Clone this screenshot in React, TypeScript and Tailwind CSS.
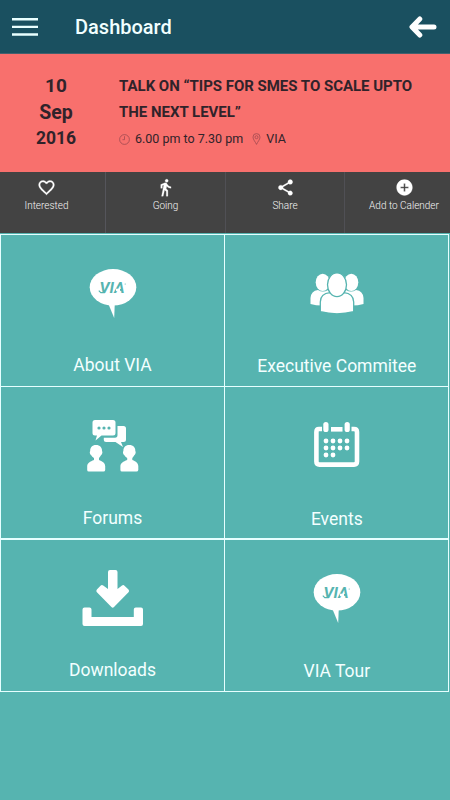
import type { ReactNode } from "react";

function SpeechLogo() {
  return (
    <svg width="48" height="50" viewBox="0 0 48 50">
      <ellipse cx="24" cy="18.3" rx="23.3" ry="18.3" fill="#fff" />
      <path d="M19 34 L25.2 49 L25.8 34 Z" fill="#fff" />
      <text
        x="10.5"
        y="24.2"
        fontSize="15.5"
        fontWeight="700"
        fontStyle="italic"
        fill="#56b4b0"
        textLength="25"
        lengthAdjust="spacingAndGlyphs"
        style={{ fontFamily: "Roboto, sans-serif" }}
      >
        VIA
      </text>
      <path d="M27 20.900h4" stroke="#fff" strokeWidth="2.400" />
      <path d="M9.800 21.600l2 2h4" fill="none" stroke="#56b4b0" strokeWidth="1.200" />
      <circle cx="36.200" cy="15" r=".6" fill="#56b4b0" />
    </svg>
  );
}

function PeopleIcon() {
  return (
    <svg width="54" height="41" viewBox="0 0 54 41" fill="#fff">
      <ellipse cx="12.7" cy="9.3" rx="7" ry="8.6" />
      <path d="M.5 31V25Q1 17.8 8 17Q13 20 18 17L21 22V32Q9 33.5.5 31Z" />
      <ellipse cx="41.3" cy="9.3" rx="7" ry="8.6" />
      <path d="M53.5 31V25Q53 17.8 46 17Q41 20 36 17L33 22V32Q45 33.5 53.5 31Z" />
      <g stroke="#56b4b0" strokeWidth="1.3">
        <path d="M10.3 38.7V29Q10.500 20.500 20 19.700Q27 25.500 34 19.700Q43.300 20.500 43.700 29V38.700Q27 43 10.300 38.700Z" />
        <ellipse cx="27" cy="11.700" rx="9.500" ry="11.900" />
      </g>
    </svg>
  );
}

function ForumIcon() {
  return (
    <svg width="52" height="53" viewBox="0 0 52 53" fill="#fff">
      <path d="M8 1H26Q28.500 1 28.500 3.500V14Q28.500 16.500 26 16.500H14.500L8.500 21.500L10 16.500H8Q5.500 16.500 5.500 14V3.500Q5.500 1 8 1Z" />
      <path d="M30.500 7H36.500Q39 7 39 9.500V20.500Q39 23 36.500 23H34L36 28L28.500 23H19Q16.800 23 16.800 21V18.800H28Q30.500 18.800 30.500 16Z" />
      <g fill="#56b4b0">
        <circle cx="12" cy="9" r="1.6" />
        <circle cx="17" cy="9" r="1.6" />
        <circle cx="22" cy="9" r="1.6" />
      </g>
      <path d="M9 26C13 26 15.300 28.700 15 32C16 33 15 35.500 14 36.200Q13 38 12 39V41C16 42.500 18 44 18.200 47V51Q18 52.500 16.500 52.500H1.800Q.2 52.500.2 51V47C.4 44 3 42.500 7 41V39Q5 38 4.200 36.200C3 35.500 2.200 33 3.200 32C3 28.700 5 26 9 26Z" />
      <path d="M42.300 26C46.300 26 48.600 28.700 48.300 32C49.300 33 48.300 35.500 47.300 36.200Q46.300 38 45.300 39V41C49.300 42.500 51 44 51.300 47V51Q51 52.500 49.500 52.500H35Q33.400 52.500 33.400 51V47C33.600 44 36.200 42.500 40.200 41V39Q38.200 38 37.400 36.200C36.200 35.500 35.400 33 36.400 32C36.200 28.700 38.200 26 42.300 26Z" />
    </svg>
  );
}

const calendarDots = [
  [12, 19], [19, 19], [26, 19], [33, 19],
  [12, 26], [19, 26], [26, 26], [33, 26],
  [12, 33], [19, 33],
];

function CalendarIcon() {
  return (
    <svg width="46" height="45" viewBox="0 0 46 45" fill="#fff">
      <path d="M8 7H5Q2.400 7 2.400 10V39.500Q2.400 42.600 5.500 42.600H40Q43 42.600 43 39.500V10Q43 7 40 7H37.500" fill="none" stroke="#fff" strokeWidth="4.600" />
      <rect x="17" y="5" width="11.500" height="4.600" />
      <rect x="9.300" y="0" width="5.200" height="10" rx="2.600" />
      <rect x="30.600" y="0" width="5.200" height="10" rx="2.600" />
      {calendarDots.map(([x, y]) => (
        <circle key={`${x}-${y}`} cx={x} cy={y} r="2.400" />
      ))}
    </svg>
  );
}

function DownloadIcon() {
  return (
    <svg width="62" height="58" viewBox="0 0 62 58" fill="#fff">
      <path d="M28 1H33.500Q35.500 1 35.500 3V20L40 16.500Q41.500 15.500 42.500 16.700L46.500 20.500Q47.800 22 46.500 23.200L32 38Q30.700 39.300 29.400 38L14.900 23.200Q13.600 22 14.900 20.500L18.500 16.700Q19.800 15.500 21.200 16.500L26 20V3Q26 1 28 1Z" />
      <path d="M2.500 38.500H7.500Q9.500 38.500 9.500 40.500V48H51.800V40.500Q51.800 38.500 53.800 38.500H59Q61 38.500 61 40.500V55Q61 57 59 57H2.500Q.5 57 .5 55V40.500Q.5 38.500 2.500 38.500Z" />
    </svg>
  );
}

const materialPaths = {
  heart:
    "M16.500 3c-1.740 0-3.410.81-4.500 2.090C10.910 3.810 9.240 3 7.500 3 4.420 3 2 5.420 2 8.500c0 3.780 3.400 6.860 8.550 11.540L12 21.350l1.450-1.320C18.600 15.360 22 12.280 22 8.500 22 5.420 19.580 3 16.500 3zm-4.400 15.550l-.1.100-.1-.1C7.140 14.240 4 11.390 4 8.500 4 6.500 5.500 5 7.500 5c1.540 0 3.040.99 3.570 2.360h1.870C13.460 5.990 14.960 5 16.500 5c2 0 3.500 1.500 3.500 3.500 0 2.890-3.140 5.740-7.900 10.050z",
  walk:
    "M13.500 5.500c1.100 0 2-.9 2-2s-.9-2-2-2-2 .9-2 2 .9 2 2 2zM9.800 8.900L7 23h2.100l1.800-8 2.100 2v6h2v-7.500l-2.100-2 .6-3C14.800 12 16.800 13 19 13v-2c-1.900 0-3.500-1-4.300-2.400l-1-1.600c-.4-.6-1-1-1.700-1-.3 0-.5.100-.8.100L6 8.300V13h2V9.600l1.800-.7",
  share:
    "M18 16.080c-.76 0-1.440.3-1.960.77L8.910 12.700c.05-.23.09-.46.090-.7s-.04-.47-.09-.7l7.050-4.110c.54.5 1.250.81 2.040.81 1.660 0 3-1.340 3-3s-1.340-3-3-3-3 1.340-3 3c0 .24.04.47.090.7L8.040 9.810C7.500 9.310 6.790 9 6 9c-1.660 0-3 1.340-3 3s1.340 3 3 3c.79 0 1.500-.31 2.040-.81l7.120 4.160c-.05.21-.08.43-.08.65 0 1.610 1.310 2.920 2.920 2.920s2.920-1.310 2.920-2.920-1.310-2.920-2.920-2.920z",
  add:
    "M12 2C6.480 2 2 6.480 2 12s4.480 10 10 10 10-4.480 10-10S17.520 2 12 2zm5 11h-4v4h-2v-4H7v-2h4V7h2v4h4v2z",
};

function Action({ path, label, className }: { path: string; label: string; className: string }) {
  return (
    <div className={`flex shrink-0 flex-col items-center pt-[6px] ${className}`}>
      <svg width="19" height="19" viewBox="0 0 24 24" fill="#fff" stroke="#fff" strokeWidth=".3">
        <path d={path} />
      </svg>
      <span className="mt-px whitespace-nowrap text-[10px] leading-[15px] text-[#f6f6f6]">
        {label}
      </span>
    </div>
  );
}

function Tile({ label, iconTop, labelTop, children }: { label: string; iconTop: string; labelTop: string; children: ReactNode }) {
  return (
    <div className="flex flex-col items-center bg-[#56b4b0]">
      <div className={`h-[117px] shrink-0 ${iconTop}`}>{children}</div>
      <span className={`whitespace-nowrap text-[17.5px] leading-6 text-[#f3ffff] ${labelTop}`}>
        {label}
      </span>
    </div>
  );
}

export default function App() {
  return (
    <div className="flex h-[800px] w-[450px] flex-col overflow-hidden bg-[#56b4b0] font-['Roboto',sans-serif]">
      <header className="flex h-[54px] shrink-0 items-center border-b border-[#45606e] bg-[#1a5060] pl-3 pr-[13px]">
        <svg className="mt-px" width="26" height="20" viewBox="0 0 26 20" stroke="#e9ffff" strokeWidth="2.4">
          <path d="M0 2.300H26M0 9.900H26M0 17.500H26" />
        </svg>
        <h1 className="ml-[37px] text-[20px] font-medium leading-6 text-[#f1ffff]">Dashboard</h1>
        <svg className="ml-auto mt-px" width="28" height="22" viewBox="0 0 28 22" fill="none" stroke="#fff" strokeWidth="5" strokeLinecap="round" strokeLinejoin="round">
          <path d="M25 11H4M10.800 3L3 11L10.800 19" />
        </svg>
      </header>

      <section className="flex h-[118px] shrink-0 bg-[#f8706d] text-[#30232a]">
        <div className="flex w-[112px] flex-col items-center pt-[18px] font-bold">
          <span className="text-[19px] leading-[27px]">10</span>
          <span className="text-[19.5px] leading-[27px]">Sep</span>
          <span className="text-[17.5px] leading-[25px]">2016</span>
        </div>
        <div className="ml-[7px] pt-[19px]">
          <h2 className="whitespace-nowrap text-[15px] font-bold leading-[26px] tracking-[-0.02px]">
            TALK ON “TIPS FOR SMES TO SCALE UPTO
            <br />
            THE NEXT LEVEL”
          </h2>
          <div className="mt-[5px] flex items-center text-[12.5px] leading-[18px]">
            <svg width="11" height="11" viewBox="0 0 11 11" fill="none" stroke="#a04a50" strokeWidth=".8">
              <circle cx="5.500" cy="5.500" r="4.900" />
              <path d="M5.500 2.200V5.700H3.500" />
            </svg>
            <span className="ml-[5px]">6.00 pm to 7.30 pm</span>
            <svg className="ml-[9px]" width="9" height="12" viewBox="0 0 9 12" fill="none" stroke="#a04a50" strokeWidth=".8">
              <path d="M4.500 11.400C3.500 9 1 6.600 1 4.100A3.500 3.500 0 0 1 8 4.100C8 6.600 5.500 9 4.500 11.400Z" />
              <circle cx="4.500" cy="4.200" r="1.500" />
            </svg>
            <span className="ml-[5px]">VIA</span>
          </div>
        </div>
      </section>

      <nav className="flex h-[61px] shrink-0 bg-[#434343] font-light">
        <Action path={materialPaths.heart} label="Interested" className="w-[106px] border-r border-[#55555b] pr-3" />
        <Action path={materialPaths.walk} label="Going" className="w-[120px] border-r border-[#505055]" />
        <Action path={materialPaths.share} label="Share" className="w-[119px] border-r border-[#505055]" />
        <Action path={materialPaths.add} label="Add to Calender" className="w-[118px]" />
      </nav>

      <main className="mr-px mt-px grid h-[458px] shrink-0 grid-cols-[223px_223px] grid-rows-[151px_151px_151px] gap-[1.3px] border-[1.3px] border-[#e6ffff] bg-[#e6ffff]">
        <Tile label="About VIA" iconTop="pt-[34px]" labelTop="mt-px"><SpeechLogo /></Tile>
        <Tile label="Executive Commitee" iconTop="pt-[38px]" labelTop="mt-[2px]"><PeopleIcon /></Tile>
        <Tile label="Forums" iconTop="pt-[32px]" labelTop="mt-[2px]"><ForumIcon /></Tile>
        <Tile label="Events" iconTop="pt-[35px]" labelTop="mt-[3px]"><CalendarIcon /></Tile>
        <Tile label="Downloads" iconTop="pt-[29px]" labelTop="mt-px"><DownloadIcon /></Tile>
        <Tile label="VIA Tour" iconTop="pt-[34px]" labelTop="mt-[2px]"><SpeechLogo /></Tile>
      </main>
    </div>
  );
}
